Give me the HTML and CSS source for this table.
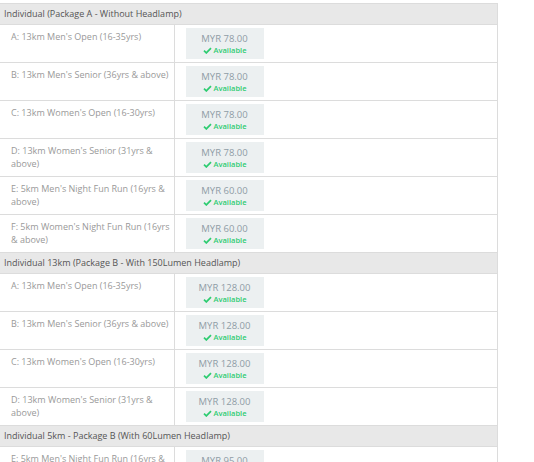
FILE: index.html
```html
<!DOCTYPE html>
<html>
<head>
<meta charset="utf-8">
<link rel="stylesheet" href="styles.css">
</head>
<body>
<table class="tickets">
  <colgroup><col class="c1"><col class="c2"><col class="c3"></colgroup>
  <tr class="group"><td colspan="3">Individual (Package A - Without Headlamp)</td></tr>
  <tr><td class="cat">A: 13km Men's Open (16-35yrs)</td><td class="pc"><div class="pbox"><div class="amt">MYR 78.00</div><div class="avail"><svg viewBox="0 0 12 10" class="chk"><path d="M1 5.3 L4.3 8.5 L11 1.6" /></svg>Available</div></div></td><td class="rest"></td></tr>
  <tr><td class="cat">B: 13km Men's Senior (36yrs &amp; above)</td><td class="pc"><div class="pbox"><div class="amt">MYR 78.00</div><div class="avail"><svg viewBox="0 0 12 10" class="chk"><path d="M1 5.3 L4.3 8.5 L11 1.6" /></svg>Available</div></div></td><td class="rest"></td></tr>
  <tr><td class="cat">C: 13km Women's Open (16-30yrs)</td><td class="pc"><div class="pbox"><div class="amt">MYR 78.00</div><div class="avail"><svg viewBox="0 0 12 10" class="chk"><path d="M1 5.3 L4.3 8.5 L11 1.6" /></svg>Available</div></div></td><td class="rest"></td></tr>
  <tr><td class="cat">D: 13km Women's Senior (31yrs &amp; above)</td><td class="pc"><div class="pbox"><div class="amt">MYR 78.00</div><div class="avail"><svg viewBox="0 0 12 10" class="chk"><path d="M1 5.3 L4.3 8.5 L11 1.6" /></svg>Available</div></div></td><td class="rest"></td></tr>
  <tr><td class="cat">E: 5km Men's Night Fun Run (16yrs &amp; above)</td><td class="pc"><div class="pbox"><div class="amt">MYR 60.00</div><div class="avail"><svg viewBox="0 0 12 10" class="chk"><path d="M1 5.3 L4.3 8.5 L11 1.6" /></svg>Available</div></div></td><td class="rest"></td></tr>
  <tr><td class="cat">F: 5km Women's Night Fun Run (16yrs &amp; above)</td><td class="pc"><div class="pbox"><div class="amt">MYR 60.00</div><div class="avail"><svg viewBox="0 0 12 10" class="chk"><path d="M1 5.3 L4.3 8.5 L11 1.6" /></svg>Available</div></div></td><td class="rest"></td></tr>
  <tr class="group"><td colspan="3">Individual 13km (Package B - With 150Lumen Headlamp)</td></tr>
  <tr><td class="cat">A: 13km Men's Open (16-35yrs)</td><td class="pc"><div class="pbox"><div class="amt">MYR 128.00</div><div class="avail"><svg viewBox="0 0 12 10" class="chk"><path d="M1 5.3 L4.3 8.5 L11 1.6" /></svg>Available</div></div></td><td class="rest"></td></tr>
  <tr><td class="cat">B: 13km Men's Senior (36yrs &amp; above)</td><td class="pc"><div class="pbox"><div class="amt">MYR 128.00</div><div class="avail"><svg viewBox="0 0 12 10" class="chk"><path d="M1 5.3 L4.3 8.5 L11 1.6" /></svg>Available</div></div></td><td class="rest"></td></tr>
  <tr><td class="cat">C: 13km Women's Open (16-30yrs)</td><td class="pc"><div class="pbox"><div class="amt">MYR 128.00</div><div class="avail"><svg viewBox="0 0 12 10" class="chk"><path d="M1 5.3 L4.3 8.5 L11 1.6" /></svg>Available</div></div></td><td class="rest"></td></tr>
  <tr><td class="cat">D: 13km Women's Senior (31yrs &amp; above)</td><td class="pc"><div class="pbox"><div class="amt">MYR 128.00</div><div class="avail"><svg viewBox="0 0 12 10" class="chk"><path d="M1 5.3 L4.3 8.5 L11 1.6" /></svg>Available</div></div></td><td class="rest"></td></tr>
  <tr class="group"><td colspan="3">Individual 5km - Package B (With 60Lumen Headlamp)</td></tr>
  <tr><td class="cat">E: 5km Men's Night Fun Run (16yrs &amp; above)</td><td class="pc"><div class="pbox"><div class="amt">MYR 95.00</div><div class="avail"><svg viewBox="0 0 12 10" class="chk"><path d="M1 5.3 L4.3 8.5 L11 1.6" /></svg>Available</div></div></td><td class="rest"></td></tr>
</table>
</body>
</html>
```
FILE: styles.css
```css
html, body {
  margin: 0;
  padding: 0;
  background: #fff;
}
body {
  padding-top: 3px;
  font-family: "Open Sans", "Liberation Sans", sans-serif;
  overflow: hidden;
}
.tickets {
  border-collapse: collapse;
  width: 498px;
  table-layout: fixed;
}
.c1 { width: 174px; }
.c2 { width: 100px; }
.tickets td {
  border-top: 1px solid #dcdcdc;
  border-bottom: 1px solid #dcdcdc;
  padding: 0;
  vertical-align: top;
}
.group td {
  background: #e8e8e8;
  border-right: 1px solid #dcdcdc;
  color: #555;
  font-size: 9px;
  height: 20px;
  line-height: 20px;
  padding: 0 0 0 4px;
}
.cat {
  border-right: 1px solid #dcdcdc;
  color: #999;
  font-size: 9px;
  line-height: 13px;
  padding: 5px 2px 0 11px !important;
}
.pc {
  padding: 3px 0 3px 11px !important;
}
.rest {
  border-right: 1px solid #dcdcdc;
}
.pbox {
  width: 78px;
  height: 31px;
  background: #ecf0f1;
  text-align: center;
  box-sizing: border-box;
  padding-top: 4px;
}
.amt {
  color: #8f9ca6;
  font-size: 9.5px;
  line-height: 13px;
}
.avail {
  color: #2ecc71;
  font-size: 7.5px;
  font-weight: 600;
  line-height: 11px;
  display: flex;
  align-items: center;
  justify-content: center;
  gap: 2px;
}
.chk {
  width: 9px;
  height: 7px;
  fill: none;
  stroke: #2ecc71;
  stroke-width: 2.4;
}
```
